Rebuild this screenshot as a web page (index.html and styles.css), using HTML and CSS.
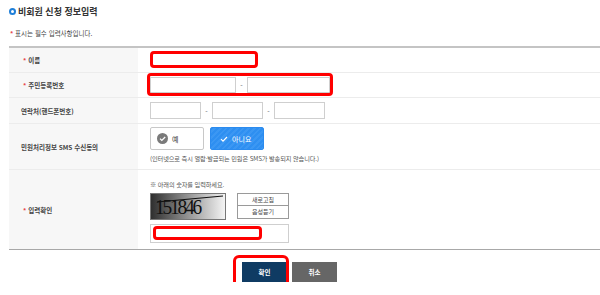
FILE: index.html
```html
<!DOCTYPE html>
<html lang="ko">
<head>
  <meta charset="UTF-8" />
  <title>비회원 신청 정보입력</title>
  <link rel="stylesheet" href="styles.css">
</head>
<body>
  <section class="page">
    <!-- 제목 -->
    <h2 class="title"><span class="dot"></span>비회원 신청 정보입력</h2>
    <p class="req"><span class="star">*</span> 표시는 필수 입력사항입니다.</p>

    <!-- 입력 폼 -->
    <div class="form">
      <div class="row r1">
        <div class="label"><span class="star">*</span> 이름</div>
        <div class="value">
          <span class="box name-box"></span>
        </div>
      </div>
      <div class="row r2">
        <div class="label"><span class="star">*</span> 주민등록번호</div>
        <div class="value">
          <div class="group hl">
            <span class="box w86"></span><span class="dash">-</span><span class="box w83"></span>
          </div>
        </div>
      </div>
      <div class="row r3">
        <div class="label plain">연락처(핸드폰번호)</div>
        <div class="value">
          <div class="group">
            <span class="box w51"></span><span class="dash">-</span><span class="box w51"></span><span class="dash">-</span><span class="box w51"></span>
          </div>
        </div>
      </div>
      <div class="row r4">
        <div class="label plain">민원처리정보 SMS 수신동의</div>
        <div class="value col">
          <div class="choices">
            <span class="choice">
              <svg class="chk" width="11" height="11" viewBox="0 0 11 11"><circle cx="5.5" cy="5.5" r="5.5" fill="#7a7a7a"/><path d="M3 5.6l1.8 1.8L8.2 4" fill="none" stroke="#fff" stroke-width="1.3"/></svg>
              예
            </span>
            <span class="choice on">
              <svg class="chk" width="8" height="8" viewBox="0 0 8 8"><path d="M1 4.2l2 2L7 2" fill="none" stroke="#fff" stroke-width="1.2"/></svg>
              아니요
            </span>
          </div>
          <p class="note">(인터넷으로 즉시 열람·발급되는 민원은 SMS가 발송되지 않습니다.)</p>
        </div>
      </div>
      <div class="row r5">
        <div class="label"><span class="star">*</span> 입력확인</div>
        <div class="value col">
          <p class="note top">※ 아래의 숫자를 입력하세요.</p>
          <div class="captcha-wrap">
            <div class="captcha">
              <svg class="scratch" width="76" height="27" viewBox="0 0 76 27"><path d="M6 8 L72 2" stroke="#111" stroke-width="1.2" fill="none"/></svg>
              <span class="digits">151846</span>
            </div>
            <div class="cap-btns">
              <span class="cap-btn">새로고침</span>
              <span class="cap-btn">음성듣기</span>
            </div>
          </div>
          <div class="box cap-input"><span class="cap-hl"></span></div>
        </div>
      </div>
    </div>

    <!-- 버튼 -->
    <div class="actions">
      <button class="btn ok">확인</button>
      <button class="btn cancel">취소</button>
    </div>
  </section>
</body>
</html>
```

FILE: styles.css
```css
* { box-sizing: border-box; }
body {
  margin: 0;
  font-family: "Noto Sans CJK KR", "Noto Sans", sans-serif;
  color: #333;
  background: #fff;
}
p { margin: 0; }
.page { padding-left: 9px; }

.title {
  display: flex; align-items: center;
  margin: 0; padding-top: 5px; height: 17px;
  font-size: 9px; font-weight: 700; color: #333;
}
.dot {
  width: 7px; height: 7px; border-radius: 50%;
  border: 2px solid #1f7fd8; margin-right: 2px;
}
.req {
  font-size: 6.5px; line-height: 8px; color: #444;
  margin: 12px 0 0 1px; height: 17px;
}
.star { color: #e8474a; font-weight: 700; }

/* 폼 테이블 */
.form {
  border-top: 2px solid #c4c4c4;
  border-bottom: 1px solid #a8a8a8;
}
.row {
  display: grid; grid-template-columns: 129px 1fr;
  border-bottom: 1px solid #ececec;
}
.row:last-child { border-bottom: none; }
.r1 { height: 25px; }
.r2 { height: 25px; }
.r3 { height: 26px; }
.r4 { height: 46px; }
.r5 { height: 79px; }
.label {
  background: #f7f7f7;
  display: flex; align-items: center;
  padding-left: 14px;
  font-size: 6.5px; font-weight: 700; color: #444;
}
.label .star { margin-right: 2px; }
.label.plain { padding-left: 12px; }
.value {
  display: flex; align-items: center;
  padding-left: 12px;
}
.value.col { flex-direction: column; align-items: flex-start; justify-content: flex-start; }

.box {
  display: inline-block; height: 17px;
  border: 1px solid #cfcfcf; background: #fff;
}
.name-box {
  width: 108px;
  border: 3px solid #f00; border-radius: 4px;
  margin-top: -1px;
}
.w86 { width: 86px; height: 16px; }
.w83 { width: 83px; height: 16px; }
.w51 { width: 51px; }
.group { display: flex; align-items: center; }
.dash { width: 11px; text-align: center; font-size: 7px; color: #666; }
.hl { position: relative; }
.hl::after {
  content: ""; position: absolute;
  left: -3px; top: -4px; right: -3px; bottom: -3px;
  border: 3px solid #f00; border-radius: 4px;
}

/* SMS 수신동의 */
.r4 .value { padding-top: 3px; }
.choices { display: flex; gap: 6px; }
.choice {
  width: 54px; height: 23px;
  display: flex; align-items: center;
  border: 1px solid #c8c8c8; border-radius: 2px;
  padding-left: 6px;
  font-size: 7px; color: #333; background: #fff;
}
.choice .chk { margin-right: 4px; }
.choice.on {
  border-color: #2b8bef; color: #fff; padding-left: 9px;
  background: repeating-linear-gradient(135deg, #2e8ff1 0 2px, #3b97f3 2px 4px);
}
.note {
  font-size: 6.2px; line-height: 8px; color: #555;
  margin-top: 5px; letter-spacing: -0.1px;
}

/* 입력확인 */
.r5 .value { padding-top: 11px; }
.note.top { margin-top: 0; }
.captcha-wrap { display: flex; gap: 11px; margin-top: 4px; }
.captcha {
  position: relative;
  width: 76px; height: 27px;
  border: 1px solid #777;
  background: linear-gradient(90deg, #2f2f2f 0%, #8a8a8a 45%, #f4f4f4 100%);
  overflow: hidden;
}
.scratch { position: absolute; left: 0; top: 0; }
.digits {
  position: absolute; left: 4px; top: 1px;
  font-family: "Liberation Serif", "DejaVu Serif", serif;
  font-size: 22px; line-height: 24px; letter-spacing: -2.5px;
  transform: scaleX(0.88); transform-origin: left center;
  color: #111;
}
.cap-btns { display: flex; flex-direction: column; }
.cap-btn {
  width: 52px; height: 13px;
  border: 1px solid #9a9a9a; background: #fff;
  font-size: 6px; line-height: 11px; text-align: center; color: #444;
}
.cap-btn + .cap-btn { border-top: none; }
.cap-input {
  position: relative;
  width: 139px; height: 19px; margin-top: 4px;
}
.cap-hl {
  position: absolute; left: 2px; top: 1px;
  width: 109px; height: 14px;
  border: 3px solid #f00; border-radius: 4px;
}

/* 버튼 */
.actions {
  display: flex; gap: 5px;
  padding-left: 233px; margin-top: 12px;
}
.btn {
  width: 45px; height: 20px;
  border: none; padding: 0;
  font-family: inherit; font-size: 6.5px; font-weight: 700; color: #fff;
}
.btn.ok { background: #0f3b63; position: relative; }
.btn.ok::after {
  content: ""; position: absolute;
  left: -9px; top: -7px; right: -2px; bottom: -7px;
  border: 3px solid #f00; border-radius: 6px;
}
.btn.cancel { background: #666; }
```
